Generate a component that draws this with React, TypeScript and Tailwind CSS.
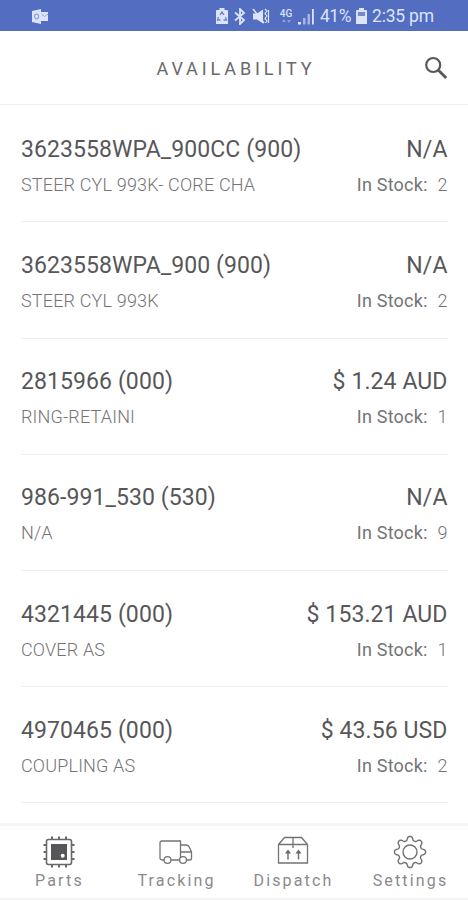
import React from "react";

type Part = { code: string; name: string; price: string; stock: number };

const parts: Part[] = [
  { code: "3623558WPA_900CC (900)", name: "STEER CYL 993K- CORE CHA", price: "N/A", stock: 2 },
  { code: "3623558WPA_900 (900)", name: "STEER CYL 993K", price: "N/A", stock: 2 },
  { code: "2815966 (000)", name: "RING-RETAINI", price: "$ 1.24 AUD", stock: 1 },
  { code: "986-991_530 (530)", name: "N/A", price: "N/A", stock: 9 },
  { code: "4321445 (000)", name: "COVER AS", price: "$ 153.21 AUD", stock: 1 },
  { code: "4970465 (000)", name: "COUPLING AS", price: "$ 43.56 USD", stock: 2 },
];

function StatusBar() {
  return (
    <header className="flex h-[31px] shrink-0 items-center bg-[#536dc0] pl-8 pt-0.5 text-[#dce4fb]">
      <svg width="17" height="15" viewBox="0 0 17 15" fill="none">
        <path d="M0 2 9 0v15l-9-2z" fill="currentColor" />
        <path d="M9 3h7v9H9z" fill="currentColor" />
        <ellipse cx="4.6" cy="7.5" rx="2" ry="2.4" stroke="#8fa2da" strokeWidth="1.2" />
        <path d="m9.5 5 3 2.5L16 5" stroke="#8fa2da" />
      </svg>
      <svg className="ml-[167px]" width="12" height="17" viewBox="0 0 12 17" fill="none">
        <path d="M3.5 0h5v2H11a1 1 0 0 1 1 1v13H0V3a1 1 0 0 1 1-1h2.5z" fill="currentColor" />
        <path d="m4 7 2-3 2 3M2.5 9l-1 3h3M9.500 9l1 3h-3" stroke="#6a81ca" strokeWidth="1.300" />
      </svg>
      <svg className="ml-[6px]" width="12" height="17" viewBox="0 0 12 17" fill="none" stroke="currentColor" strokeWidth="1.800">
        <path d="m1 4.500 9 7.500-4 4V1l4 4-9 7.500" />
      </svg>
      <svg className="ml-[6px]" width="18" height="17" viewBox="0 0 18 17" fill="none" stroke="currentColor">
        <path d="M1 5.500h4l6-4v14l-6-4H1z" fill="currentColor" stroke="none" />
        <path d="m1 1 11 14" strokeWidth="1.600" />
        <path d="m13 1 2 2-2 2.500 2 2.500-2 2.500 2 2.500-1.500 2M16.500 2v13" strokeWidth="1.200" />
      </svg>
      <div className="ml-[9px] flex w-[14px] flex-col items-center">
        <span className="text-[10px] font-medium leading-[10px]">4G</span>
        <svg width="9" height="5" viewBox="0 0 9 5" fill="currentColor" opacity=".4">
          <path d="m0 3 2-3 2 3zM5 1h4L7 4z" />
        </svg>
      </div>
      <svg className="ml-[5px]" width="17" height="17" viewBox="0 0 17 17" fill="currentColor">
        <path d="M0 14h3v2.500H0z" />
        <path d="M5 10h2.500v6.500H5zM9.500 6H12v10.500H9.500z" opacity=".6" />
        <path d="M14 1h1.800v15.500H14z" />
      </svg>
      <span className="ml-[5px] w-[31px] whitespace-nowrap text-[17.500px] leading-none tracking-[-0.500px]">41%</span>
      <svg className="ml-[5px]" width="11" height="17" viewBox="0 0 11 17">
        <path d="M3 0h5v2h2a1 1 0 0 1 1 1v13H0V3a1 1 0 0 1 1-1h2z" fill="currentColor" />
        <path d="M2 4h7v4H2z" fill="#7389cf" />
      </svg>
      <span className="ml-[5px] whitespace-nowrap text-[17.500px] leading-none tracking-[-0.200px]">2:35 pm</span>
    </header>
  );
}

function PartRow({ part }: { part: Part }) {
  return (
    <li className="flex h-[116.200px] flex-col border-b border-[#f1f1f1] pt-[28.800px]">
      <div className="flex h-[30px] items-center justify-between whitespace-nowrap text-[23px] tracking-[0.090px] text-[#57575a]">
        <span>{part.code}</span>
        <span>{part.price}</span>
      </div>
      <div className="mt-[7.200px] flex h-6 items-center justify-between whitespace-nowrap text-[18px] text-[#747476]">
        <span className="font-light tracking-[0.170px]">{part.name}</span>
        <span className="flex">
          <span className="tracking-[0.200px] text-[#747476]">In Stock:</span>
          <span className="ml-[10px] font-light">{part.stock}</span>
        </span>
      </div>
    </li>
  );
}

function ChipIcon() {
  return (
    <svg width="34" height="34" viewBox="0 0 34 34" fill="none" stroke="#68686b">
      <rect x="4.500" y="4.500" width="25" height="25" rx="2" strokeWidth="1.600" />
      <rect x="9" y="9" width="16" height="16" fill="#56565a" stroke="none" />
      <circle cx="20.700" cy="20.700" r="2" fill="#fff" stroke="none" />
      <path d="M10 4V1.500m7 2.500V1.500m7 2.500V1.500M10 32.500V30m7 2.500V30m7 2.500V30M4 10H1.500M4 17H1.500M4 24H1.500m31-14H30m2.500 7H30m2.500 7H30" strokeWidth="2" />
    </svg>
  );
}

function TruckIcon() {
  return (
    <svg width="34" height="34" viewBox="0 0 34 34" fill="none" stroke="#737376" strokeWidth="1.300">
      <path d="M5 25H3a2 2 0 0 1-2-2V8a2 2 0 0 1 2-2h18.500v19H12M21.500 10H27a4 4 0 0 1 3.500 2.500L32.500 17v6a2 2 0 0 1-2 2H27M21.500 17h11" />
      <circle cx="8.500" cy="25" r="3.400" fill="#fff" />
      <circle cx="24" cy="25" r="3.400" fill="#fff" />
    </svg>
  );
}

function BoxIcon() {
  return (
    <svg width="34" height="34" viewBox="0 0 34 34" fill="none" stroke="#737376" strokeWidth="1.300">
      <path d="M2.500 9.500 8.500 2.500h17L31.500 9.500V28h-29zM2.500 9.500h29M17 2.500V13" />
      <path d="M12 24.500v-8M22.500 24.500v-8" strokeWidth="1.500" />
      <path d="m12 14.500-3 4h6zM22.500 14.500l-3 4h6z" fill="#68686b" stroke="none" />
    </svg>
  );
}

// Eight rounded teeth traced around the centre of a 34-unit square.
const gearPoints = Array.from({ length: 144 }, (_, i) => {
  const a = (i / 144) * Math.PI * 2;
  const r = 13.6 + 2.1 * Math.tanh(1.6 * Math.cos(8 * a));
  return `${(17 + r * Math.cos(a)).toFixed(2)},${(17 + r * Math.sin(a)).toFixed(2)}`;
}).join(" ");

function GearIcon() {
  return (
    <svg width="34" height="34" viewBox="0 0 34 34" fill="none" stroke="#707073" strokeWidth="1.400">
      <polygon points={gearPoints} strokeLinejoin="round" />
      <circle cx="17" cy="17" r="7" />
    </svg>
  );
}

const tabs = [
  { label: "Parts", icon: <ChipIcon /> },
  { label: "Tracking", icon: <TruckIcon /> },
  { label: "Dispatch", icon: <BoxIcon /> },
  { label: "Settings", icon: <GearIcon /> },
];

export default function App() {
  return (
    <div className="flex h-[900px] w-[468px] flex-col overflow-hidden bg-white font-['Roboto',sans-serif]">
      <StatusBar />
      <div className="grid h-[74px] shrink-0 grid-cols-[1fr_auto_1fr] items-center border-b border-[#eeeeee] px-[20px]">
        <h1 className="col-start-2 pl-1 pt-0.5 text-[18px] leading-6 tracking-[3.900px] text-[#69696b]">AVAILABILITY</h1>
        <svg className="justify-self-end" width="24" height="24" viewBox="0 0 24 24" fill="none" stroke="#58585a">
          <circle cx="9.200" cy="9" r="7" strokeWidth="2.200" />
          <path d="m14.200 14 8 8" strokeWidth="2.800" />
        </svg>
      </div>
      <main className="min-h-0 flex-1 overflow-hidden pl-[21px] pr-[20.500px]">
        <ul className="pt-[1.300px]">
          {parts.map((p) => (
            <PartRow key={p.code} part={p} />
          ))}
        </ul>
      </main>
      <nav className="grid h-[77px] shrink-0 grid-cols-4 border-y-2 border-t-[3px] border-[#f5f5f5] pt-[8.500px] text-[#8a8a8d]">
        {tabs.map((t) => (
          <div key={t.label} className="flex flex-col items-center">
            {t.icon}
            <span className="mt-[2px] pl-[2px] text-[16px] leading-5 tracking-[2.150px]">{t.label}</span>
          </div>
        ))}
      </nav>
    </div>
  );
}
